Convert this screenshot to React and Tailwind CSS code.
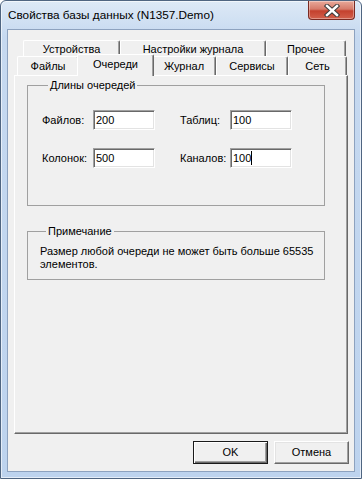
import React from 'react';

const font = "font-['Liberation_Sans',Arial,sans-serif]";

function Tab({ label, className, active }) {
  return (
    <div
      className={`flex items-center justify-center border-t border-l border-r border-t-white border-l-white border-r-[#696969] rounded-t-[2px] shadow-[inset_-1px_0_0_#a0a0a0] bg-[#f0f0f0] ${
        active ? 'relative z-10 -mx-[2px] -mb-[1px] h-[22px] pb-[3px]' : 'h-[19px]'
      } ${className}`}
    >
      {label}
    </div>
  );
}

function TopTab({ label, className }) {
  return (
    <div
      className={`flex h-[16px] items-center justify-center border-t border-l border-r border-t-white border-l-white border-r-[#696969] rounded-t-[2px] shadow-[inset_-1px_0_0_#a0a0a0] bg-[#f0f0f0] pt-[1px] ${className}`}
    >
      {label}
    </div>
  );
}

function Field({ value, caret }) {
  return (
    <div className="flex h-[20px] w-[62px] items-center border border-t-[#a0a0a0] border-l-[#a0a0a0] border-r-white border-b-white bg-white pl-[1px] shadow-[inset_1px_1px_0_#696969,inset_-1px_-1px_0_#e3e3e3]">
      <span className="pl-[1px]">{value}</span>
      {caret && <span className="h-[14px] w-px bg-black" />}
    </div>
  );
}

function Button({ children, primary }) {
  return (
    <button
      className={`h-[23px] w-[75px] bg-[#f0f0f0] text-black ${
        primary
          ? 'border border-[#1a1a1a] shadow-[inset_1px_1px_0_#fff,inset_-1px_-1px_0_#696969,inset_-2px_-2px_0_#a0a0a0]'
          : 'border border-t-white border-l-white border-r-[#696969] border-b-[#696969] shadow-[inset_-1px_-1px_0_#a0a0a0,inset_1px_1px_0_#e3e3e3]'
      }`}
    >
      {children}
    </button>
  );
}

export default function App() {
  return (
    <div
      className={`flex h-[479px] w-[362px] flex-col rounded-t-[6px] border border-[#4f6581] bg-[linear-gradient(to_bottom,#dde9f6,#c6d9f0_36px,#bdd3ee)] text-[11px] text-black shadow-[inset_0_0_0_1px_rgba(255,255,255,0.6)] ${font}`}
    >
      {/* title bar */}
      <div className="flex h-[28px] shrink-0 items-start">
        <div className="ml-[7px] h-[28px] flex-1 text-[11.75px] leading-[28px]">
          Свойства базы данных (N1357.Demo)
        </div>
        <div className="mr-[6px] flex h-[19px] w-[47px] items-center justify-center rounded-b-[4px] border border-t-0 border-[#7a2a22] bg-[linear-gradient(to_bottom,#e9a99a,#d67b6a_45%,#c4412e_55%,#d2604c)] shadow-[inset_0_0_0_1px_rgba(255,255,255,0.35)]">
          <svg width="16" height="13" viewBox="0 0 16 13">
            <path d="M3 2 L13 11 M13 2 L3 11" stroke="#3b3b3b" strokeWidth="4.4" strokeLinecap="square" />
            <path d="M3 2 L13 11 M13 2 L3 11" stroke="#fff" strokeWidth="2.4" strokeLinecap="square" />
          </svg>
        </div>
      </div>

      {/* client area */}
      <div className="mx-[6px] mb-[6px] flex flex-1 flex-col border border-[#8da2bf] bg-[#f0f0f0] pl-[6px] pr-[5px] pt-[10px]">
        <div className="ml-[9px] flex">
          <TopTab label="Устройства" className="w-[97px]" />
          <TopTab label="Настройки журнала" className="w-[146px]" />
          <TopTab label="Прочее" className="w-[80px]" />
        </div>
        <div className="ml-[3px] flex h-[19px] items-end">
          <Tab label="Файлы" className="w-[62px]" />
          <Tab label="Очереди" className="w-[77px]" active />
          <Tab label="Журнал" className="w-[64px]" />
          <Tab label="Сервисы" className="w-[72px]" />
          <Tab label="Сеть" className="w-[59px]" />
        </div>

        <div className="flex h-[359px] w-[334px] flex-col border border-t-white border-l-white border-r-[#696969] border-b-[#696969] px-[12px] pt-[2px] shadow-[inset_-1px_-1px_0_#a0a0a0]">
          <fieldset className="h-[128px] w-[298px] border border-[#a0a0a0] px-[14px]">
            <legend className="ml-[6px] px-[2px] leading-[14px]">Длины очередей</legend>
            <div className="mt-[18px] flex h-[20px] items-center">
              <span className="w-[51px]">Файлов:</span>
              <Field value="200" />
              <span className="ml-[25px] w-[50px]">Таблиц:</span>
              <Field value="100" />
            </div>
            <div className="mt-[18px] flex h-[20px] items-center">
              <span className="w-[51px]">Колонок:</span>
              <Field value="500" />
              <span className="ml-[25px] w-[50px]">Каналов:</span>
              <Field value="100" caret />
            </div>
          </fieldset>

          <fieldset className="mt-[18px] h-[56px] w-[298px] border border-[#a0a0a0] pl-[12px]">
            <legend className="ml-[6px] px-[2px] leading-[14px]">Примечание</legend>
            <p className="mt-[7px] leading-[13px]">
              Размер любой очереди не может быть больше 65535
              <br />
              элементов.
            </p>
          </fieldset>
        </div>

        <div className="mt-[7px] flex justify-end gap-[6px]">
          <Button primary>OK</Button>
          <Button>Отмена</Button>
        </div>
      </div>
    </div>
  );
}
